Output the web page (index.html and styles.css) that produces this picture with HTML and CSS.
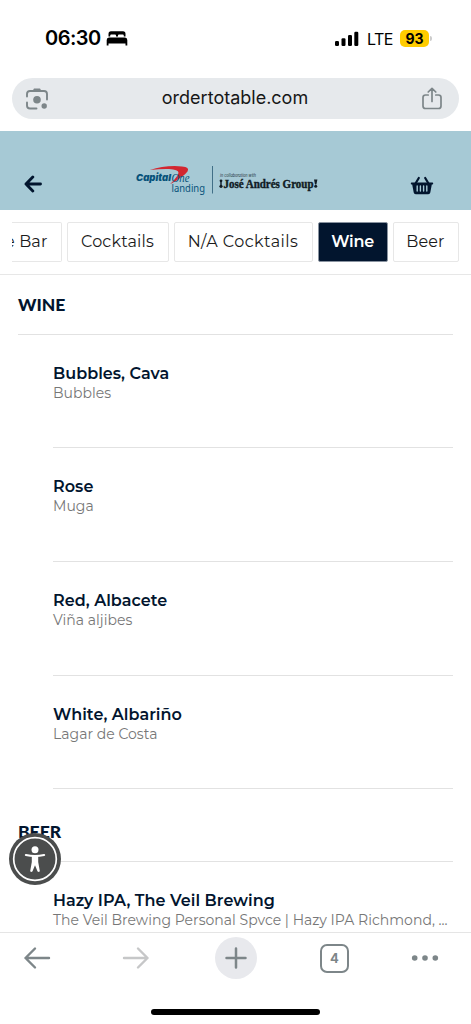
FILE: index.html
```
<!DOCTYPE html>
<html lang="en">
<head>
<meta charset="utf-8">
<title>Order to Table</title>
<link rel="stylesheet" href="styles.css">
</head>
<body>
<div class="status">
  <span class="time">06:30</span>
  <svg class="bed" width="22" height="15" viewBox="0 0 22 15"><path d="M2.500 5.600V3Q2.500.3 5 .3H17Q19.500.3 19.500 3V5.600H17.800V4.500Q17.800 3.500 16.800 3.500H13Q12 3.500 12 4.500V5.600H10V4.500Q10 3.500 9 3.500H5.200Q4.200 3.500 4.200 4.500V5.600Z"/><path d="M.7 9Q.7 6.500 3 6.500H19Q21.300 6.500 21.300 9V14.500H19.500V12.600H2.500V14.500H.7Z"/></svg>
  <svg class="signal" width="24" height="15" viewBox="0 0 24 15"><rect x="0" y="10" width="4" height="5" rx="1.200"/><rect x="6.500" y="7.200" width="4" height="7.800" rx="1.200"/><rect x="13" y="4" width="4" height="11" rx="1.200"/><rect x="19.300" y=".8" width="4" height="14.200" rx="1.200"/></svg>
  <span class="lte">LTE</span>
  <span class="battery">93</span><i class="battery-tip"></i>
</div>
<div class="address">
  <svg width="22" height="22" viewBox="0 0 22 22" fill="none" stroke="#7d8689" stroke-width="1.900" stroke-linecap="round"><path d="M1 8.500V6Q1 3 4 3H18Q21 3 21 6V11.500M1 14.500V17.500Q1 20.500 4 20.500H10.500"/><path d="M6.500 3L8 .6H14L15.500 3Z" fill="#7d8689" stroke="none"/><circle cx="11" cy="11.700" r="3.800" fill="#7d8689" stroke="none"/><circle cx="18.200" cy="18" r="2.700" fill="#7d8689" stroke="none"/></svg>
  <span class="url">ordertotable.com</span>
  <svg width="20" height="23" viewBox="0 0 20 23" fill="none" stroke="#7d8689" stroke-width="1.700" stroke-linecap="round" stroke-linejoin="round"><path d="M6.200 8H3.500Q1 8 1 10.500V19Q1 21.500 3.500 21.500H16.500Q19 21.500 19 19V10.500Q19 8 16.500 8H13.800M10 14.500V1.500M6.200 5L10 1.300 13.800 5"/></svg>
</div>
<header class="brand-bar">
  <svg class="back" width="18" height="18" viewBox="0 0 18 18" fill="none" stroke="#02152e" stroke-width="2.900" stroke-linecap="round" stroke-linejoin="round"><path d="M16.500 9H2M8.800 2L2 9 8.800 16"/></svg>
  <svg class="logo" width="184" height="34" viewBox="0 0 184 34">
    <path d="M14 4Q29-1 46 .4Q54 1 51.500 5.500Q47.500 11 34 18.300Q42 10.500 42.500 6.800Q42.500 3.500 33 3Q25 2.700 14 4Z" fill="#d22630"/>
    <text x="0" y="15.300" class="logo-capital" textLength="35" lengthAdjust="spacingAndGlyphs">Capital</text>
    <text x="35.500" y="15.800" class="logo-one" textLength="18" lengthAdjust="spacingAndGlyphs">One</text>
    <text x="35.500" y="26.300" class="logo-landing" textLength="33.500" lengthAdjust="spacingAndGlyphs">landing</text>
    <path d="M76.500 0V27.500" stroke="#416f87" stroke-width="1"/>
    <text x="84" y="10.500" class="logo-collab" textLength="36" lengthAdjust="spacingAndGlyphs">in collaboration with</text>
    <text x="87.500" y="21.700" class="logo-group" textLength="90" lengthAdjust="spacingAndGlyphs">José Andrés Group</text>
    <g fill="#111c25"><circle cx="85" cy="14.800" r="1.400"/><circle cx="85" cy="20.300" r="1.600"/><path d="M84.300 15h1.400v5h-1.400zM178 13.500h3.400l-1 5h-1.400z"/><circle cx="179.700" cy="20.300" r="1.500"/></g>
  </svg>
  <svg class="basket" width="24" height="19" viewBox="0 0 24 19"><path d="M5.500 7.500L8.800 2M18.500 7.500L15.200 2" fill="none" stroke="#02152e" stroke-width="2.200" stroke-linecap="round"/><path d="M1.600 6.500H22.400Q23.200 6.500 23.200 7.500T22.400 8.500H21.800L20.300 16.500Q20 18.300 18.300 18.300H5.700Q4 18.300 3.700 16.500L2.200 8.500H1.600Q.8 8.500.8 7.500T1.600 6.500Z" fill="#02152e"/><path d="M7.200 10V15M10.400 10V15M13.600 10V15M16.800 10V15" stroke="#a6c9d5" stroke-width="1.400" stroke-linecap="round"/></svg>
</header>
<nav class="tabs">
  <div class="tab tab-cut"><span>The Bar</span></div>
  <div class="tab tab-cocktails">Cocktails</div>
  <div class="tab tab-na">N/A Cocktails</div>
  <div class="tab tab-wine">Wine</div>
  <div class="tab tab-beer">Beer</div>
</nav>
<main class="menu">
  <h2 class="section">WINE</h2>
  <article class="item"><h3>Bubbles, Cava</h3><p>Bubbles</p></article>
  <article class="item"><h3>Rose</h3><p>Muga</p></article>
  <article class="item"><h3>Red, Albacete</h3><p>Viña aljibes</p></article>
  <article class="item"><h3>White, Albariño</h3><p>Lagar de Costa</p></article>
  <h2 class="section section-beer">BEER</h2>
  <article class="item"><h3>Hazy IPA, The Veil Brewing</h3><p>The Veil Brewing Personal Spvce | Hazy IPA Richmond, ...</p></article>
</main>
<svg class="access" width="52" height="52" viewBox="0 0 52 52"><circle cx="26" cy="26" r="26" fill="#4b4d4d"/><circle cx="26" cy="26" r="21.300" fill="none" stroke="#fff" stroke-width="1.700"/><circle cx="26" cy="16.700" r="3.500" fill="#fff"/><path d="M16.900 22Q26 24 35.100 22" fill="none" stroke="#fff" stroke-width="2.200" stroke-linecap="round"/><path d="M22.800 22.500H29.200V29L30.800 38Q30.300 39.700 28.600 38.600L26 32.200 23.400 38.600Q21.700 39.700 21.200 38L22.800 29Z" fill="#fff"/></svg>
<footer class="toolbar">
  <div class="tools">
    <svg width="28" height="24" viewBox="0 0 28 24" fill="none" stroke="#7d8689" stroke-width="2.400" stroke-linecap="round" stroke-linejoin="round"><path d="M26 12H2.500M12 2.500L2.500 12 12 21.500"/></svg>
    <svg width="28" height="24" viewBox="0 0 28 24" fill="none" stroke="#c6c7c8" stroke-width="2.400" stroke-linecap="round" stroke-linejoin="round"><path d="M2 12H25.500M16 2.500L25.500 12 16 21.500"/></svg>
    <svg width="42" height="42" viewBox="0 0 42 42"><circle cx="21" cy="21" r="21" fill="#e8e9ed"/><path d="M11.500 21H30.500M21 11.500V30.500" stroke="#7d8689" stroke-width="2.500" stroke-linecap="round"/></svg>
    <span class="count">4</span>
    <svg width="28" height="8" viewBox="0 0 28 8" fill="#7d8689"><circle cx="3.700" cy="4" r="2.800"/><circle cx="14" cy="4" r="2.800"/><circle cx="24.300" cy="4" r="2.800"/></svg>
  </div>
  <div class="home"></div>
</footer>
</body>
</html>
```
FILE: styles.css
```
* { box-sizing: border-box; }
body { margin: 0; height: 1024px; display: flex; flex-direction: column; overflow: hidden; background: #fff; font-family: Montserrat, Inter, sans-serif; color: #02152e; }
svg { display: block; flex: none; }
.status { height: 78px; flex: none; display: flex; align-items: flex-start; padding: 26px 0 0 45px; color: #000; font-family: Inter, sans-serif; line-height: 24px; }
.time { width: 61px; font-size: 20px; font-weight: 600; letter-spacing: -.5px; }
.bed { margin-top: 5px; }
.signal { margin: 5px 0 0 207px; }
.lte { width: 33px; margin-left: 8px; font-size: 16px; letter-spacing: -.5px; line-height: 26px; }
.battery { width: 29px; height: 17px; margin-top: 4px; border-radius: 5px; background: #fc0; font-size: 14px; font-weight: 700; line-height: 17px; text-align: center; }
.battery-tip { width: 1.500px; height: 5px; margin: 10px 0 0 1px; border-radius: 0 2px 2px 0; background: #ccc; }
.address { height: 41px; flex: none; margin: 0 12px 12px; padding: 0 17px 0 14px; border-radius: 21px; background: #e6e9ec; display: flex; align-items: center; justify-content: space-between; }
.url { color: #171717; font: 18px/39px Inter, sans-serif; padding-bottom: 2px; }
.brand-bar { height: 79px; flex: none; display: flex; align-items: flex-start; padding: 35px 0 0 24px; background: #a6c9d5; }
.back { margin-top: 9px; }
.logo { margin-left: 94px; overflow: visible; }
.basket { margin: 10px 0 0 90px; }
.logo-capital { font: italic 900 9.500px Inter, sans-serif; fill: #08527a; }
.logo-one { font: italic 12px "Liberation Serif", serif; fill: #08527a; }
.logo-landing { font: 10px "Noto Sans", sans-serif; fill: #08527a; }
.logo-collab { font: italic 4.500px Inter, sans-serif; fill: #22323b; }
.logo-group { font: bold 12px "Liberation Serif", serif; fill: #111c25; stroke: #111c25; stroke-width: .4px; }
.tabs { height: 65px; flex: none; display: flex; align-items: flex-start; gap: 5px; padding: 12px 0 0 12px; border-bottom: 1px solid #e7e7e7; }
.tab { height: 40px; flex: none; border: 1px solid #e7e7e7; border-radius: 2px; font-size: 16px; line-height: 38px; letter-spacing: .15px; text-align: center; color: #1b1b1b; white-space: nowrap; overflow: hidden; }
.tab-cut { width: 49.500px; border-left: 0; border-radius: 0 2px 2px 0; display: flex; justify-content: flex-end; padding-right: 13px; }
.tab-cocktails { width: 102px; }
.tab-na { width: 139px; letter-spacing: .45px; }
.tab-wine { width: 70px; background: #02152e; border-color: #8993a0; color: #fff; font-weight: 600; letter-spacing: -.25px; }
.tab-beer { width: 66px; }
.menu { flex: 1; min-height: 0; overflow: hidden; padding: 0 18px; }
.section { height: 59.700px; margin: 0; padding-top: 17px; border-bottom: 1px solid #e2e2e2; font: 900 17.500px/26px Lato, sans-serif; letter-spacing: 0; }
.section-beer { height: 72.500px; padding-top: 30px; }
.item { height: 113.700px; margin-left: 35px; padding-top: 28px; border-bottom: 1px solid #e2e2e2; }
.item h3 { margin: 0; font-size: 16px; font-weight: 600; line-height: 21px; letter-spacing: .04px; white-space: nowrap; }
.item p { margin: 0; font-size: 14px; line-height: 18px; letter-spacing: .02px; color: #777; white-space: nowrap; }
.access { position: absolute; left: 9px; top: 833px; }
.toolbar { height: 92px; flex: none; border-top: 1px solid #e5e5e5; background: #fff; }
.tools { height: 50px; display: grid; grid-template-columns: 74px 124px 75px 123px 58px; align-items: center; justify-items: center; }
.count { width: 29px; height: 29px; border: 2.500px solid #7d8689; border-radius: 7px; color: #7d8689; font: 700 13px/25px Inter, sans-serif; text-align: center; }
.home { width: 169px; height: 6px; margin: 26px auto 0; border-radius: 3px; background: #000; }
```
